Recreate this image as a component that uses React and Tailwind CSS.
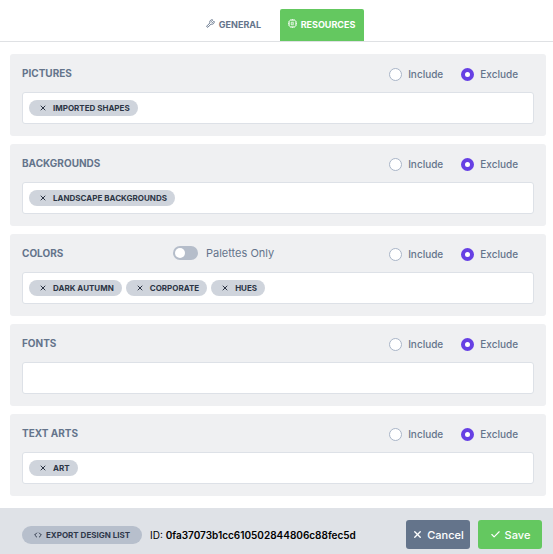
import { useState } from 'react'
import { Wrench, X, Check, Code } from 'lucide-react'

const SECTIONS = [
  { id: 'pictures', title: 'PICTURES', tags: ['IMPORTED SHAPES'] },
  { id: 'backgrounds', title: 'BACKGROUNDS', tags: ['LANDSCAPE BACKGROUNDS'] },
  { id: 'colors', title: 'COLORS', tags: ['DARK AUTUMN', 'CORPORATE', 'HUES'], palettes: true },
  { id: 'fonts', title: 'FONTS', tags: [] },
  { id: 'textarts', title: 'TEXT ARTS', tags: ['ART'] },
]

function ChipIcon() {
  return (
    <svg width="9" height="9" viewBox="0 0 18 18" fill="none" stroke="currentColor" strokeWidth="1.6" className="mb-1" aria-hidden="true">
      <rect x="2.5" y="2.5" width="13" height="13" rx="3" />
      <path d="M11.5 7V6.5h-5v5h5V11M9 9h2.5" />
      <path d="M6 0v2M9 0v2M12 0v2M6 16v2M9 16v2M12 16v2M0 6h2M0 9h2M0 12h2M16 6h2M16 9h2M16 12h2" />
    </svg>
  )
}

function ModeRadio({ name, label, checked, onChange }) {
  return (
    <label className="flex items-center gap-1.5 text-[10px] leading-4 font-medium text-[#64748b]">
      <input
        type="radio"
        name={name}
        checked={checked}
        onChange={onChange}
        className="size-[13px] appearance-none rounded-full border border-[#a9b5c8] bg-white checked:border-4 checked:border-[#6640e4]"
      />
      {label}
    </label>
  )
}

function Tag({ label, onRemove }) {
  return (
    <span className="flex h-4 items-center gap-1.5 rounded-full bg-[#cfd4dc] pr-2 pl-2.5 text-[8px] leading-4 font-bold text-[#2c3444]">
      <button type="button" aria-label={`Remove ${label}`} onClick={onRemove}>
        <X size={8} strokeWidth={3} />
      </button>
      {label}
    </span>
  )
}

function Section({ section }) {
  const [mode, setMode] = useState('exclude')
  const [tags, setTags] = useState(section.tags)
  const [palettesOnly, setPalettesOnly] = useState(false)

  return (
    <section className="rounded-[3px] bg-[#eff0f2] px-3 pb-3">
      <div className="grid h-[38px] grid-cols-[151px_1fr_auto] items-center pr-4">
        <h2 className="text-[10px] leading-4 font-bold text-[#64748b]">{section.title}</h2>
        <div>
          {section.palettes && (
            <label className="flex items-center gap-2 text-[11px] leading-4 text-[#64748b]">
              <input
                type="checkbox"
                role="switch"
                checked={palettesOnly}
                onChange={e => setPalettesOnly(e.target.checked)}
                className="flex h-3.5 w-[25px] appearance-none items-center rounded-full bg-[#b5bdca] px-0.5 before:size-2.5 before:rounded-full before:bg-white checked:justify-end checked:bg-[#6640e4]"
              />
              Palettes Only
            </label>
          )}
        </div>
        <div className="flex items-center gap-[18px] pt-0.5">
          <ModeRadio name={section.id} label="Include" checked={mode === 'include'} onChange={() => setMode('include')} />
          <ModeRadio name={section.id} label="Exclude" checked={mode === 'exclude'} onChange={() => setMode('exclude')} />
        </div>
      </div>

      {/* Tag box */}
      <div className="flex min-h-8 flex-wrap items-center gap-1 rounded-[3px] border border-[#dde1e7] bg-white px-1.5">
        {tags.map(tag => (
          <Tag key={tag} label={tag} onRemove={() => setTags(tags.filter(t => t !== tag))} />
        ))}
      </div>
    </section>
  )
}

export default function App() {
  const [tab, setTab] = useState('resources')

  const tabStyle = active =>
    active
      ? 'flex h-8 w-[84px] items-center justify-center gap-1 rounded-t-[2px] bg-[#64c860] text-white'
      : 'flex h-8 w-[84px] items-center justify-center gap-1 rounded-t-[2px] text-[#64748b]'

  return (
    <div className="bg-white font-['Inter',sans-serif]">
      <nav className="flex justify-center gap-1 border-b border-[#dfe1e4] pt-[9px] pl-0.5 text-[9px] leading-4 font-bold">
        <button type="button" onClick={() => setTab('general')} className={tabStyle(tab === 'general')}>
          <Wrench size={9} strokeWidth={2.5} className="mb-1" />
          GENERAL
        </button>
        <button type="button" onClick={() => setTab('resources')} className={tabStyle(tab === 'resources')}>
          <ChipIcon />
          RESOURCES
        </button>
      </nav>

      <main className="flex flex-col gap-2 pt-3 pr-[7px] pb-3 pl-2.5">
        {SECTIONS.map(section => (
          <Section key={section.id} section={section} />
        ))}
      </main>

      <footer className="flex items-center bg-[#dfe2e7] pt-3 pr-[11px] pb-[5px] pl-[22px]">
        <button
          type="button"
          className="flex h-[18px] items-center gap-1 rounded-full bg-[#b7bfcc] px-3 text-[8px] leading-4 font-bold text-[#2f384a]"
        >
          <Code size={8} strokeWidth={3} />
          EXPORT DESIGN LIST
        </button>
        <p className="ml-2 text-[10px] leading-4 text-black">
          ID: <strong className="font-semibold">0fa37073b1cc610502844806c88fec5d</strong>
        </p>
        <div className="ml-auto flex gap-2 text-[11px] leading-4 font-medium text-white">
          <button type="button" className="flex h-[29px] w-16 items-center justify-center gap-1 rounded-[3px] bg-[#64748b]">
            <X size={11} strokeWidth={3} />
            Cancel
          </button>
          <button type="button" className="flex h-[29px] w-16 items-center justify-center gap-1 rounded-[3px] bg-[#64c860]">
            <Check size={11} strokeWidth={2.5} />
            Save
          </button>
        </div>
      </footer>
    </div>
  )
}
